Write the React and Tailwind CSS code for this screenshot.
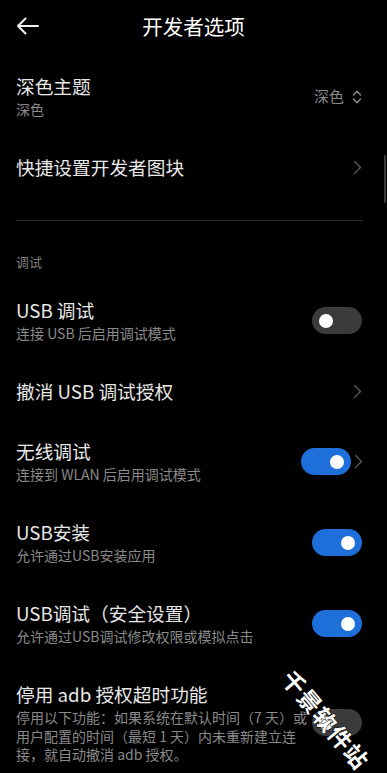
import React from 'react';

const font = { fontFamily: '"Noto Sans CJK SC", "Noto Sans", sans-serif' };

function Chevron() {
  return (
    <svg width="9" height="15" viewBox="0 0 9 15" className="shrink-0">
      <path d="M1.5 1.5 L7.5 7.5 L1.5 13.5" fill="none" stroke="#5a5a5a" strokeWidth="1.4" strokeLinecap="round" strokeLinejoin="round" />
    </svg>
  );
}

function UpDown() {
  return (
    <svg width="10" height="16" viewBox="0 0 10 16" className="shrink-0">
      <path d="M1.5 6 L5 2.2 L8.5 6 M1.5 10 L5 13.8 L8.5 10" fill="none" stroke="#8a8a8a" strokeWidth="1.4" strokeLinecap="round" strokeLinejoin="round" />
    </svg>
  );
}

function Toggle({ on }) {
  return (
    <div className={`w-[50px] h-[27px] rounded-full flex items-center shrink-0 px-[7px] ${on ? 'bg-[#1e6fd9] justify-end' : 'bg-[#3b3b3b] justify-start'}`}>
      <div className="w-[14px] h-[14px] rounded-full bg-white" />
    </div>
  );
}

function TwoLine({ title, sub, right }) {
  return (
    <div className="flex items-center pl-4 pr-[25px] pt-4 pb-5">
      <div className="flex-1 min-w-0">
        <div className="text-[18.7px] leading-[24px] text-[#e8e8e8]">{title}</div>
        <div className="mt-[2px] text-[14px] leading-[19px] text-[#8a8a8a]">{sub}</div>
      </div>
      {right}
    </div>
  );
}

function OneLine({ title }) {
  return (
    <div className="h-[60px] pb-[4px] flex items-center justify-between pl-4 pr-[25px]">
      <div className="text-[18.7px] leading-[24px] text-[#e8e8e8]">{title}</div>
      <Chevron />
    </div>
  );
}

export default function App() {
  return (
    <div className="relative w-[387px] h-[773px] bg-black overflow-hidden" style={font}>
      {/* header */}
      <div className="h-[58px] pb-[6px] flex items-center relative px-4">
        <svg width="23" height="18" viewBox="0 0 23 18">
          <path d="M22 9 H2 M9.5 1.5 L2 9 L9.5 16.5" fill="none" stroke="#f2f2f2" strokeWidth="2" strokeLinecap="round" strokeLinejoin="round" />
        </svg>
        <div className="absolute left-0 right-0 top-0 h-[52px] flex items-center justify-center text-[20.5px] text-white pointer-events-none">
          开发者选项
        </div>
      </div>

      <TwoLine
        title="深色主题"
        sub="深色"
        right={
          <div className="flex items-center gap-[8px] text-[15px] text-[#8a8a8a]">
            <span>深色</span>
            <UpDown />
          </div>
        }
      />
      <OneLine title="快捷设置开发者图块" />

      <div className="ml-4 mr-[24px] mt-[21px] h-px bg-[#2b2b2b]" />
      <div className="pl-4 mt-[31px] mb-[10px] text-[13px] leading-[20px] text-[#7d7d7d]">调试</div>

      <TwoLine title="USB 调试" sub="连接 USB 后启用调试模式" right={<Toggle on={false} />} />
      <OneLine title="撤消 USB 调试授权" />
      <TwoLine
        title="无线调试"
        sub="连接到 WLAN 后启用调试模式"
        right={
          <div className="flex items-center gap-[3px] -mr-[1px]">
            <Toggle on />
            <Chevron />
          </div>
        }
      />
      <TwoLine title="USB安装" sub="允许通过USB安装应用" right={<Toggle on />} />
      <TwoLine title="USB调试（安全设置）" sub="允许通过USB调试修改权限或模拟点击" right={<Toggle on />} />
      <div className="flex items-center pl-4 pr-[25px] pt-4">
        <div className="flex-1 min-w-0">
          <div className="text-[18.7px] leading-[24px] text-[#e8e8e8]">停用 adb 授权超时功能</div>
          <div className="mt-[2px] text-[14px] leading-[18.5px] text-[#8a8a8a] whitespace-nowrap">
            <div>停用以下功能：如果系统在默认时间（7 天）或</div>
            <div>用户配置的时间（最短 1 天）内未重新建立连</div>
            <div>接，就自动撤消 adb 授权。</div>
          </div>
        </div>
        <Toggle on={false} />
      </div>

      {/* scrollbar */}
      <div className="absolute left-[384px] top-[155px] w-[2px] h-[48px] rounded-full bg-[#3a3a3a]" />

      {/* watermark */}
      <div className="absolute left-[266px] top-[702px] rotate-[50deg] origin-center text-[23px] font-bold text-white tracking-[1px] whitespace-nowrap [-webkit-text-stroke:1px_black] [paint-order:stroke_fill]">
        千景软件站
      </div>
    </div>
  );
}
